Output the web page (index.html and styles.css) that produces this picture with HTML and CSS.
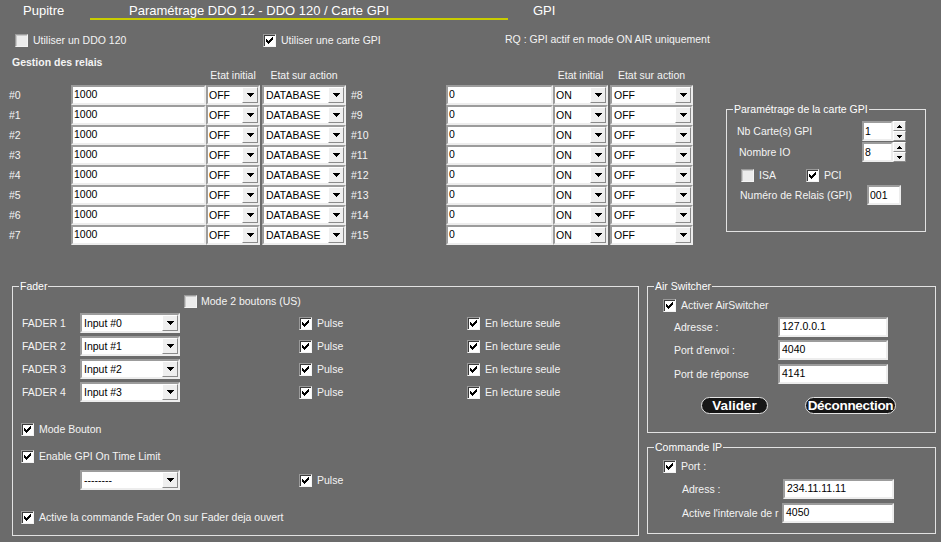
FILE: index.html
```html
<!DOCTYPE html>
<html lang="fr">
<head>
<meta charset="utf-8">
<title>Paramétrage DDO</title>
<link rel="stylesheet" href="styles.css">
</head>
<body>
<div class="app">
  <header class="tabs">
    <span class="tab tab-first">Pupitre</span>
    <span class="tab tab-active">Paramétrage DDO 12 - DDO 120 / Carte GPI</span>
    <span class="tab tab-last">GPI</span>
  </header>

  <div class="options">
    <div class="chk opt-ddo"><span class="cb"></span>Utiliser un DDO 120</div>
    <div class="chk opt-gpi"><span class="cb on"><svg class="ck" width="11" height="11" viewBox="0 0 11 11"><path d="M8 2h1v1H8zM7 3h2v1H7zM2 4h1v1H2zM6 4h3v1H6zM2 5h2v1H2zM5 5h3v1H5zM2 6h5v1H2zM3 7h3v1H3zM4 8h1v1H4z"/></svg></span>Utiliser une carte GPI</div>
    <span class="rq">RQ : GPI actif en mode ON AIR uniquement</span>
  </div>

  <div class="upper">
    <section class="relays">
      <h2>Gestion des relais</h2>
      <div class="relay-grid">
        <span></span><span></span><span class="eh">Etat initial</span><span class="eh eh-act">Etat sur action</span><span></span><span></span><span class="eh">Etat initial</span><span class="eh eh-act">Etat sur action</span>

        <span class="rl">#0</span><div class="txt">1000</div><div class="sel"><span class="v">OFF</span><span class="dd"><svg width="7" height="4" viewBox="0 0 7 4"><path d="M0 0h7v1H0zM1 1h5v1H1zM2 2h3v1H2zM3 3h1v1H3z"/></svg></span></div><div class="sel act"><span class="v">DATABASE</span><span class="dd"><svg width="7" height="4" viewBox="0 0 7 4"><path d="M0 0h7v1H0zM1 1h5v1H1zM2 2h3v1H2zM3 3h1v1H3z"/></svg></span></div>
        <span class="rl rl2">#8</span><div class="txt">0</div><div class="sel"><span class="v">ON</span><span class="dd"><svg width="7" height="4" viewBox="0 0 7 4"><path d="M0 0h7v1H0zM1 1h5v1H1zM2 2h3v1H2zM3 3h1v1H3z"/></svg></span></div><div class="sel act"><span class="v">OFF</span><span class="dd"><svg width="7" height="4" viewBox="0 0 7 4"><path d="M0 0h7v1H0zM1 1h5v1H1zM2 2h3v1H2zM3 3h1v1H3z"/></svg></span></div>

        <span class="rl">#1</span><div class="txt">1000</div><div class="sel"><span class="v">OFF</span><span class="dd"><svg width="7" height="4" viewBox="0 0 7 4"><path d="M0 0h7v1H0zM1 1h5v1H1zM2 2h3v1H2zM3 3h1v1H3z"/></svg></span></div><div class="sel act"><span class="v">DATABASE</span><span class="dd"><svg width="7" height="4" viewBox="0 0 7 4"><path d="M0 0h7v1H0zM1 1h5v1H1zM2 2h3v1H2zM3 3h1v1H3z"/></svg></span></div>
        <span class="rl rl2">#9</span><div class="txt">0</div><div class="sel"><span class="v">ON</span><span class="dd"><svg width="7" height="4" viewBox="0 0 7 4"><path d="M0 0h7v1H0zM1 1h5v1H1zM2 2h3v1H2zM3 3h1v1H3z"/></svg></span></div><div class="sel act"><span class="v">OFF</span><span class="dd"><svg width="7" height="4" viewBox="0 0 7 4"><path d="M0 0h7v1H0zM1 1h5v1H1zM2 2h3v1H2zM3 3h1v1H3z"/></svg></span></div>

        <span class="rl">#2</span><div class="txt">1000</div><div class="sel"><span class="v">OFF</span><span class="dd"><svg width="7" height="4" viewBox="0 0 7 4"><path d="M0 0h7v1H0zM1 1h5v1H1zM2 2h3v1H2zM3 3h1v1H3z"/></svg></span></div><div class="sel act"><span class="v">DATABASE</span><span class="dd"><svg width="7" height="4" viewBox="0 0 7 4"><path d="M0 0h7v1H0zM1 1h5v1H1zM2 2h3v1H2zM3 3h1v1H3z"/></svg></span></div>
        <span class="rl rl2">#10</span><div class="txt">0</div><div class="sel"><span class="v">ON</span><span class="dd"><svg width="7" height="4" viewBox="0 0 7 4"><path d="M0 0h7v1H0zM1 1h5v1H1zM2 2h3v1H2zM3 3h1v1H3z"/></svg></span></div><div class="sel act"><span class="v">OFF</span><span class="dd"><svg width="7" height="4" viewBox="0 0 7 4"><path d="M0 0h7v1H0zM1 1h5v1H1zM2 2h3v1H2zM3 3h1v1H3z"/></svg></span></div>

        <span class="rl">#3</span><div class="txt">1000</div><div class="sel"><span class="v">OFF</span><span class="dd"><svg width="7" height="4" viewBox="0 0 7 4"><path d="M0 0h7v1H0zM1 1h5v1H1zM2 2h3v1H2zM3 3h1v1H3z"/></svg></span></div><div class="sel act"><span class="v">DATABASE</span><span class="dd"><svg width="7" height="4" viewBox="0 0 7 4"><path d="M0 0h7v1H0zM1 1h5v1H1zM2 2h3v1H2zM3 3h1v1H3z"/></svg></span></div>
        <span class="rl rl2">#11</span><div class="txt">0</div><div class="sel"><span class="v">ON</span><span class="dd"><svg width="7" height="4" viewBox="0 0 7 4"><path d="M0 0h7v1H0zM1 1h5v1H1zM2 2h3v1H2zM3 3h1v1H3z"/></svg></span></div><div class="sel act"><span class="v">OFF</span><span class="dd"><svg width="7" height="4" viewBox="0 0 7 4"><path d="M0 0h7v1H0zM1 1h5v1H1zM2 2h3v1H2zM3 3h1v1H3z"/></svg></span></div>

        <span class="rl">#4</span><div class="txt">1000</div><div class="sel"><span class="v">OFF</span><span class="dd"><svg width="7" height="4" viewBox="0 0 7 4"><path d="M0 0h7v1H0zM1 1h5v1H1zM2 2h3v1H2zM3 3h1v1H3z"/></svg></span></div><div class="sel act"><span class="v">DATABASE</span><span class="dd"><svg width="7" height="4" viewBox="0 0 7 4"><path d="M0 0h7v1H0zM1 1h5v1H1zM2 2h3v1H2zM3 3h1v1H3z"/></svg></span></div>
        <span class="rl rl2">#12</span><div class="txt">0</div><div class="sel"><span class="v">ON</span><span class="dd"><svg width="7" height="4" viewBox="0 0 7 4"><path d="M0 0h7v1H0zM1 1h5v1H1zM2 2h3v1H2zM3 3h1v1H3z"/></svg></span></div><div class="sel act"><span class="v">OFF</span><span class="dd"><svg width="7" height="4" viewBox="0 0 7 4"><path d="M0 0h7v1H0zM1 1h5v1H1zM2 2h3v1H2zM3 3h1v1H3z"/></svg></span></div>

        <span class="rl">#5</span><div class="txt">1000</div><div class="sel"><span class="v">OFF</span><span class="dd"><svg width="7" height="4" viewBox="0 0 7 4"><path d="M0 0h7v1H0zM1 1h5v1H1zM2 2h3v1H2zM3 3h1v1H3z"/></svg></span></div><div class="sel act"><span class="v">DATABASE</span><span class="dd"><svg width="7" height="4" viewBox="0 0 7 4"><path d="M0 0h7v1H0zM1 1h5v1H1zM2 2h3v1H2zM3 3h1v1H3z"/></svg></span></div>
        <span class="rl rl2">#13</span><div class="txt">0</div><div class="sel"><span class="v">ON</span><span class="dd"><svg width="7" height="4" viewBox="0 0 7 4"><path d="M0 0h7v1H0zM1 1h5v1H1zM2 2h3v1H2zM3 3h1v1H3z"/></svg></span></div><div class="sel act"><span class="v">OFF</span><span class="dd"><svg width="7" height="4" viewBox="0 0 7 4"><path d="M0 0h7v1H0zM1 1h5v1H1zM2 2h3v1H2zM3 3h1v1H3z"/></svg></span></div>

        <span class="rl">#6</span><div class="txt">1000</div><div class="sel"><span class="v">OFF</span><span class="dd"><svg width="7" height="4" viewBox="0 0 7 4"><path d="M0 0h7v1H0zM1 1h5v1H1zM2 2h3v1H2zM3 3h1v1H3z"/></svg></span></div><div class="sel act"><span class="v">DATABASE</span><span class="dd"><svg width="7" height="4" viewBox="0 0 7 4"><path d="M0 0h7v1H0zM1 1h5v1H1zM2 2h3v1H2zM3 3h1v1H3z"/></svg></span></div>
        <span class="rl rl2">#14</span><div class="txt">0</div><div class="sel"><span class="v">ON</span><span class="dd"><svg width="7" height="4" viewBox="0 0 7 4"><path d="M0 0h7v1H0zM1 1h5v1H1zM2 2h3v1H2zM3 3h1v1H3z"/></svg></span></div><div class="sel act"><span class="v">OFF</span><span class="dd"><svg width="7" height="4" viewBox="0 0 7 4"><path d="M0 0h7v1H0zM1 1h5v1H1zM2 2h3v1H2zM3 3h1v1H3z"/></svg></span></div>

        <span class="rl">#7</span><div class="txt">1000</div><div class="sel"><span class="v">OFF</span><span class="dd"><svg width="7" height="4" viewBox="0 0 7 4"><path d="M0 0h7v1H0zM1 1h5v1H1zM2 2h3v1H2zM3 3h1v1H3z"/></svg></span></div><div class="sel act"><span class="v">DATABASE</span><span class="dd"><svg width="7" height="4" viewBox="0 0 7 4"><path d="M0 0h7v1H0zM1 1h5v1H1zM2 2h3v1H2zM3 3h1v1H3z"/></svg></span></div>
        <span class="rl rl2">#15</span><div class="txt">0</div><div class="sel"><span class="v">ON</span><span class="dd"><svg width="7" height="4" viewBox="0 0 7 4"><path d="M0 0h7v1H0zM1 1h5v1H1zM2 2h3v1H2zM3 3h1v1H3z"/></svg></span></div><div class="sel act"><span class="v">OFF</span><span class="dd"><svg width="7" height="4" viewBox="0 0 7 4"><path d="M0 0h7v1H0zM1 1h5v1H1zM2 2h3v1H2zM3 3h1v1H3z"/></svg></span></div>
      </div>
    </section>

    <fieldset class="gpi-card">
      <legend>Paramétrage de la carte GPI</legend>
      <div class="gpi-body">
        <div class="frow">
          <span class="lab">Nb Carte(s) GPI</span>
          <div class="txt spin-in">1</div>
          <div class="spin">
            <span><svg width="5" height="3" viewBox="0 0 5 3"><path d="M2 0h1v1H2zM1 1h3v1H1zM0 2h5v1H0z"/></svg></span>
            <span><svg width="5" height="3" viewBox="0 0 5 3"><path d="M0 0h5v1H0zM1 1h3v1H1zM2 2h1v1H2z"/></svg></span>
          </div>
        </div>
        <div class="frow frow2">
          <span class="lab lab-io">Nombre IO</span>
          <div class="txt spin-in">8</div>
          <div class="spin">
            <span><svg width="5" height="3" viewBox="0 0 5 3"><path d="M2 0h1v1H2zM1 1h3v1H1zM0 2h5v1H0z"/></svg></span>
            <span><svg width="5" height="3" viewBox="0 0 5 3"><path d="M0 0h5v1H0zM1 1h3v1H1zM2 2h1v1H2z"/></svg></span>
          </div>
        </div>
        <div class="bus">
          <div class="chk isa"><span class="cb"></span>ISA</div>
          <div class="chk"><span class="cb on"><svg class="ck" width="11" height="11" viewBox="0 0 11 11"><path d="M8 2h1v1H8zM7 3h2v1H7zM2 4h1v1H2zM6 4h3v1H6zM2 5h2v1H2zM5 5h3v1H5zM2 6h5v1H2zM3 7h3v1H3zM4 8h1v1H4z"/></svg></span>PCI</div>
        </div>
        <div class="frow frow3">
          <span class="lab">Numéro de Relais (GPI)</span>
          <div class="txt relais-in">001</div>
        </div>
      </div>
    </fieldset>
  </div>

  <div class="lower">
    <fieldset class="fader">
      <legend>Fader</legend>
      <div class="fader-body">
        <div class="chk mode2"><span class="cb"></span>Mode 2 boutons (US)</div>
        <div class="fgrid">
          <span class="flab">FADER 1</span>
          <div class="sel fsel"><span class="v">Input #0</span><span class="dd"><svg width="7" height="4" viewBox="0 0 7 4"><path d="M0 0h7v1H0zM1 1h5v1H1zM2 2h3v1H2zM3 3h1v1H3z"/></svg></span></div>
          <span></span>
          <div class="chk"><span class="cb on"><svg class="ck" width="11" height="11" viewBox="0 0 11 11"><path d="M8 2h1v1H8zM7 3h2v1H7zM2 4h1v1H2zM6 4h3v1H6zM2 5h2v1H2zM5 5h3v1H5zM2 6h5v1H2zM3 7h3v1H3zM4 8h1v1H4z"/></svg></span>Pulse</div>
          <div class="chk"><span class="cb on"><svg class="ck" width="11" height="11" viewBox="0 0 11 11"><path d="M8 2h1v1H8zM7 3h2v1H7zM2 4h1v1H2zM6 4h3v1H6zM2 5h2v1H2zM5 5h3v1H5zM2 6h5v1H2zM3 7h3v1H3zM4 8h1v1H4z"/></svg></span>En lecture seule</div>

          <span class="flab">FADER 2</span>
          <div class="sel fsel"><span class="v">Input #1</span><span class="dd"><svg width="7" height="4" viewBox="0 0 7 4"><path d="M0 0h7v1H0zM1 1h5v1H1zM2 2h3v1H2zM3 3h1v1H3z"/></svg></span></div>
          <span></span>
          <div class="chk"><span class="cb on"><svg class="ck" width="11" height="11" viewBox="0 0 11 11"><path d="M8 2h1v1H8zM7 3h2v1H7zM2 4h1v1H2zM6 4h3v1H6zM2 5h2v1H2zM5 5h3v1H5zM2 6h5v1H2zM3 7h3v1H3zM4 8h1v1H4z"/></svg></span>Pulse</div>
          <div class="chk"><span class="cb on"><svg class="ck" width="11" height="11" viewBox="0 0 11 11"><path d="M8 2h1v1H8zM7 3h2v1H7zM2 4h1v1H2zM6 4h3v1H6zM2 5h2v1H2zM5 5h3v1H5zM2 6h5v1H2zM3 7h3v1H3zM4 8h1v1H4z"/></svg></span>En lecture seule</div>

          <span class="flab">FADER 3</span>
          <div class="sel fsel"><span class="v">Input #2</span><span class="dd"><svg width="7" height="4" viewBox="0 0 7 4"><path d="M0 0h7v1H0zM1 1h5v1H1zM2 2h3v1H2zM3 3h1v1H3z"/></svg></span></div>
          <span></span>
          <div class="chk"><span class="cb on"><svg class="ck" width="11" height="11" viewBox="0 0 11 11"><path d="M8 2h1v1H8zM7 3h2v1H7zM2 4h1v1H2zM6 4h3v1H6zM2 5h2v1H2zM5 5h3v1H5zM2 6h5v1H2zM3 7h3v1H3zM4 8h1v1H4z"/></svg></span>Pulse</div>
          <div class="chk"><span class="cb on"><svg class="ck" width="11" height="11" viewBox="0 0 11 11"><path d="M8 2h1v1H8zM7 3h2v1H7zM2 4h1v1H2zM6 4h3v1H6zM2 5h2v1H2zM5 5h3v1H5zM2 6h5v1H2zM3 7h3v1H3zM4 8h1v1H4z"/></svg></span>En lecture seule</div>

          <span class="flab">FADER 4</span>
          <div class="sel fsel"><span class="v">Input #3</span><span class="dd"><svg width="7" height="4" viewBox="0 0 7 4"><path d="M0 0h7v1H0zM1 1h5v1H1zM2 2h3v1H2zM3 3h1v1H3z"/></svg></span></div>
          <span></span>
          <div class="chk"><span class="cb on"><svg class="ck" width="11" height="11" viewBox="0 0 11 11"><path d="M8 2h1v1H8zM7 3h2v1H7zM2 4h1v1H2zM6 4h3v1H6zM2 5h2v1H2zM5 5h3v1H5zM2 6h5v1H2zM3 7h3v1H3zM4 8h1v1H4z"/></svg></span>Pulse</div>
          <div class="chk"><span class="cb on"><svg class="ck" width="11" height="11" viewBox="0 0 11 11"><path d="M8 2h1v1H8zM7 3h2v1H7zM2 4h1v1H2zM6 4h3v1H6zM2 5h2v1H2zM5 5h3v1H5zM2 6h5v1H2zM3 7h3v1H3zM4 8h1v1H4z"/></svg></span>En lecture seule</div>
        </div>

        <div class="chk fopt mode-btn"><span class="cb on"><svg class="ck" width="11" height="11" viewBox="0 0 11 11"><path d="M8 2h1v1H8zM7 3h2v1H7zM2 4h1v1H2zM6 4h3v1H6zM2 5h2v1H2zM5 5h3v1H5zM2 6h5v1H2zM3 7h3v1H3zM4 8h1v1H4z"/></svg></span>Mode Bouton</div>
        <div class="chk fopt enable-gpi"><span class="cb on"><svg class="ck" width="11" height="11" viewBox="0 0 11 11"><path d="M8 2h1v1H8zM7 3h2v1H7zM2 4h1v1H2zM6 4h3v1H6zM2 5h2v1H2zM5 5h3v1H5zM2 6h5v1H2zM3 7h3v1H3zM4 8h1v1H4z"/></svg></span>Enable GPI On Time Limit</div>
        <div class="fgrid fgrid-time">
          <span></span>
          <div class="sel fsel"><span class="v">--------</span><span class="dd"><svg width="7" height="4" viewBox="0 0 7 4"><path d="M0 0h7v1H0zM1 1h5v1H1zM2 2h3v1H2zM3 3h1v1H3z"/></svg></span></div>
          <span></span>
          <div class="chk"><span class="cb on"><svg class="ck" width="11" height="11" viewBox="0 0 11 11"><path d="M8 2h1v1H8zM7 3h2v1H7zM2 4h1v1H2zM6 4h3v1H6zM2 5h2v1H2zM5 5h3v1H5zM2 6h5v1H2zM3 7h3v1H3zM4 8h1v1H4z"/></svg></span>Pulse</div>
          <span></span>
        </div>
        <div class="chk fopt active-cmd"><span class="cb on"><svg class="ck" width="11" height="11" viewBox="0 0 11 11"><path d="M8 2h1v1H8zM7 3h2v1H7zM2 4h1v1H2zM6 4h3v1H6zM2 5h2v1H2zM5 5h3v1H5zM2 6h5v1H2zM3 7h3v1H3zM4 8h1v1H4z"/></svg></span>Active la commande Fader On sur Fader deja ouvert</div>
      </div>
    </fieldset>

    <div class="side">
      <fieldset class="air">
        <legend>Air Switcher</legend>
        <div class="air-body">
          <div class="chk sub-chk"><span class="cb on"><svg class="ck" width="11" height="11" viewBox="0 0 11 11"><path d="M8 2h1v1H8zM7 3h2v1H7zM2 4h1v1H2zM6 4h3v1H6zM2 5h2v1H2zM5 5h3v1H5zM2 6h5v1H2zM3 7h3v1H3zM4 8h1v1H4z"/></svg></span>Activer AirSwitcher</div>
          <div class="irow ir1"><span class="lab">Adresse :</span><div class="txt">127.0.0.1</div></div>
          <div class="irow ir2"><span class="lab">Port d'envoi :</span><div class="txt">4040</div></div>
          <div class="irow ir3"><span class="lab">Port de réponse</span><div class="txt">4141</div></div>
          <div class="btns">
            <span class="pill pill-ok">Valider</span>
            <span class="pill pill-off">Déconnection</span>
          </div>
        </div>
      </fieldset>

      <fieldset class="cmd">
        <legend>Commande IP</legend>
        <div class="cmd-body">
          <div class="chk sub-chk"><span class="cb on"><svg class="ck" width="11" height="11" viewBox="0 0 11 11"><path d="M8 2h1v1H8zM7 3h2v1H7zM2 4h1v1H2zM6 4h3v1H6zM2 5h2v1H2zM5 5h3v1H5zM2 6h5v1H2zM3 7h3v1H3zM4 8h1v1H4z"/></svg></span>Port :</div>
          <div class="irow cr1"><span class="lab">Adress :</span><div class="txt">234.11.11.11</div></div>
          <div class="irow cr2"><span class="lab">Active l'intervale de r</span><div class="txt">4050</div></div>
        </div>
      </fieldset>
    </div>
  </div>
</div>
</body>
</html>
```

FILE: styles.css
```css
* { box-sizing: border-box; }
html, body { margin: 0; padding: 0; }
body {
  background: #6b6b6b;
  font-family: "Liberation Sans", Arial, sans-serif;
  font-size: 10.5px;
  color: #f4f4f4;
}
.app { width: 941px; height: 542px; overflow: hidden; }

/* header tabs */
.tabs { display: flex; height: 20px; font-size: 13px; line-height: 14px; color: #fff; }
.tab { padding-top: 4px; white-space: nowrap; }
.tab-first { margin-left: 23px; width: 67px; }
.tab-active { width: 418px; height: 20px; padding-left: 39px; border-bottom: 2px solid #c8cc00; }
.tab-last { margin-left: 25px; }

/* checkboxes */
.chk { display: flex; align-items: center; gap: 5px; height: 13px; line-height: 13px; white-space: nowrap; color: #f4f4f4; }
.cb {
  flex: none;
  width: 13px; height: 13px;
  border: 1px solid;
  border-color: #9a9a9a #f4f4f4 #f4f4f4 #9a9a9a;
  background: #ececec;
  box-shadow: inset 1px 1px 0 #c9c9c9;
}
.cb.on { background: #fff; box-shadow: inset 1px 1px 0 #3c3c3c; }
.ck { display: block; fill: #000; shape-rendering: crispEdges; }

/* options row */
.options { display: flex; align-items: center; height: 13px; margin-top: 14px; }
.opt-ddo { margin-left: 15px; width: 248px; }
.opt-gpi { width: 242px; }
.rq { line-height: 13px; white-space: nowrap; margin-top: -2px; }

/* upper area */
.upper { display: flex; align-items: flex-start; }
.relays { width: 693px; }
.relays h2 { margin: 9px 0 0 12px; font-size: 10.5px; font-weight: bold; line-height: 13px; color: #f4f4f4; }
.relay-grid {
  display: grid;
  grid-template-columns: 71px 135px 54px 86px 100px 107px 55px 85px;
  grid-template-rows: 16px repeat(8, 20px);
}
.eh { line-height: 13px; text-align: center; white-space: nowrap; }
.eh-act { padding-left: 2px; }
.rl { padding-left: 9px; line-height: 20px; }
.rl2 { padding-left: 5px; }

/* fields */
.txt, .sel {
  height: 20px;
  border: 2px solid;
  border-color: #9c9c9c #ededed #ededed #9c9c9c;
  background: #fff;
  color: #000;
  white-space: nowrap;
  overflow: hidden;
}
.txt { padding: 1px 0 0 1px; line-height: 12px; }
.sel { display: flex; }
.sel.act { margin-left: 2px; }
.sel .v { flex: 1; padding: 1px 0 0 1px; line-height: 15px; overflow: hidden; }
.sel.act .v { padding-left: 2px; }
.dd {
  flex: none;
  width: 16px; height: 16px;
  background: #efefef;
  border: 1px solid;
  border-color: #fff #8a8a8a #8a8a8a #fff;
  display: flex; align-items: center; justify-content: center;
}
.dd svg, .spin svg { display: block; fill: #000; shape-rendering: crispEdges; }

/* fieldsets */
fieldset { margin: 0; padding: 0; border: 1px solid #e2e2e2; min-width: 0; }
legend { margin-left: 6px; padding: 0 1px; line-height: 13px; font-size: 10.5px; color: #fff; }

/* GPI card */
.gpi-card { margin: 56px 0 0 33px; width: 200px; }
.gpi-body { padding: 5px 0 26px 0; }
.frow { display: flex; align-items: center; height: 20px; }
.frow2 { margin-top: 1px; }
.frow .lab { padding-left: 10px; width: 135px; white-space: nowrap; }
.frow .lab-io { padding-left: 12px; }
.spin-in { width: 31px; padding-top: 2px; padding-left: 1px; }
.spin { width: 13px; height: 20px; display: flex; flex-direction: column; }
.spin span {
  flex: 1;
  background: #efefef;
  border: 1px solid;
  border-color: #fff #8a8a8a #8a8a8a #fff;
  display: flex; align-items: center; justify-content: center;
}
.bus { display: flex; margin-top: 7px; padding-left: 14px; }
.bus .isa { width: 65px; }
.frow3 { margin-top: 3px; }
.frow3 .lab { padding-left: 13px; width: 140px; }
.relais-in { width: 34px; padding-top: 2px; }

/* lower area */
.lower { display: flex; align-items: flex-start; margin-top: 35px; }
.fader { margin-left: 12px; width: 627px; }
.fader-body { padding: 0 0 11px 0; }
.mode2 { margin: 2px 0 0 171px; gap: 4px; }
.fgrid {
  display: grid;
  grid-template-columns: 67px 100px 119px 168px 1fr;
  grid-auto-rows: 20px;
  row-gap: 3px;
  align-items: center;
  margin-top: 5px;
}
.flab { padding-left: 9px; white-space: nowrap; }
.fsel .v { padding-left: 2px; }
.fopt { margin-left: 8px; }
.mode-btn { margin-top: 21px; }
.enable-gpi { margin-top: 14px; }
.fgrid-time { margin-top: 7px; }
.active-cmd { margin-top: 21px; }

.side { margin-left: 8px; width: 289px; }
.air-body { padding: 0 0 18px 0; }
.sub-chk { margin: 6px 0 0 15px; }
.irow { display: flex; align-items: center; height: 20px; }
.irow .lab { padding-left: 26px; width: 130px; white-space: nowrap; overflow: hidden; }
.irow .txt { width: 110px; padding-left: 2px; }
.ir1 { margin-top: 5px; }
.ir2 { margin-top: 3px; }
.ir3 { margin-top: 4px; }
.btns { display: flex; height: 17px; margin-top: 13px; padding-left: 53px; }
.pill {
  height: 17px;
  border: 1px solid #e4e4e4;
  border-radius: 9px;
  background: #161616;
  color: #fff;
  font-weight: bold;
  font-size: 13.5px;
  line-height: 15px;
  text-align: center;
  white-space: nowrap;
  overflow: hidden;
}
.pill-ok { width: 67px; }
.pill-off { width: 91px; margin-left: 37px; letter-spacing: -0.3px; }

.cmd { margin-top: 8px; }
.cmd-body { padding: 0 0 10px 0; }
.cr1 { margin-top: 6px; }
.cr1 .lab { padding-left: 34px; width: 135px; }
.cr1 .txt { width: 111px; }
.cr2 { margin-top: 4px; }
.cr2 .lab { padding-left: 34px; width: 134px; }
.cr2 .txt { width: 112px; }
```
